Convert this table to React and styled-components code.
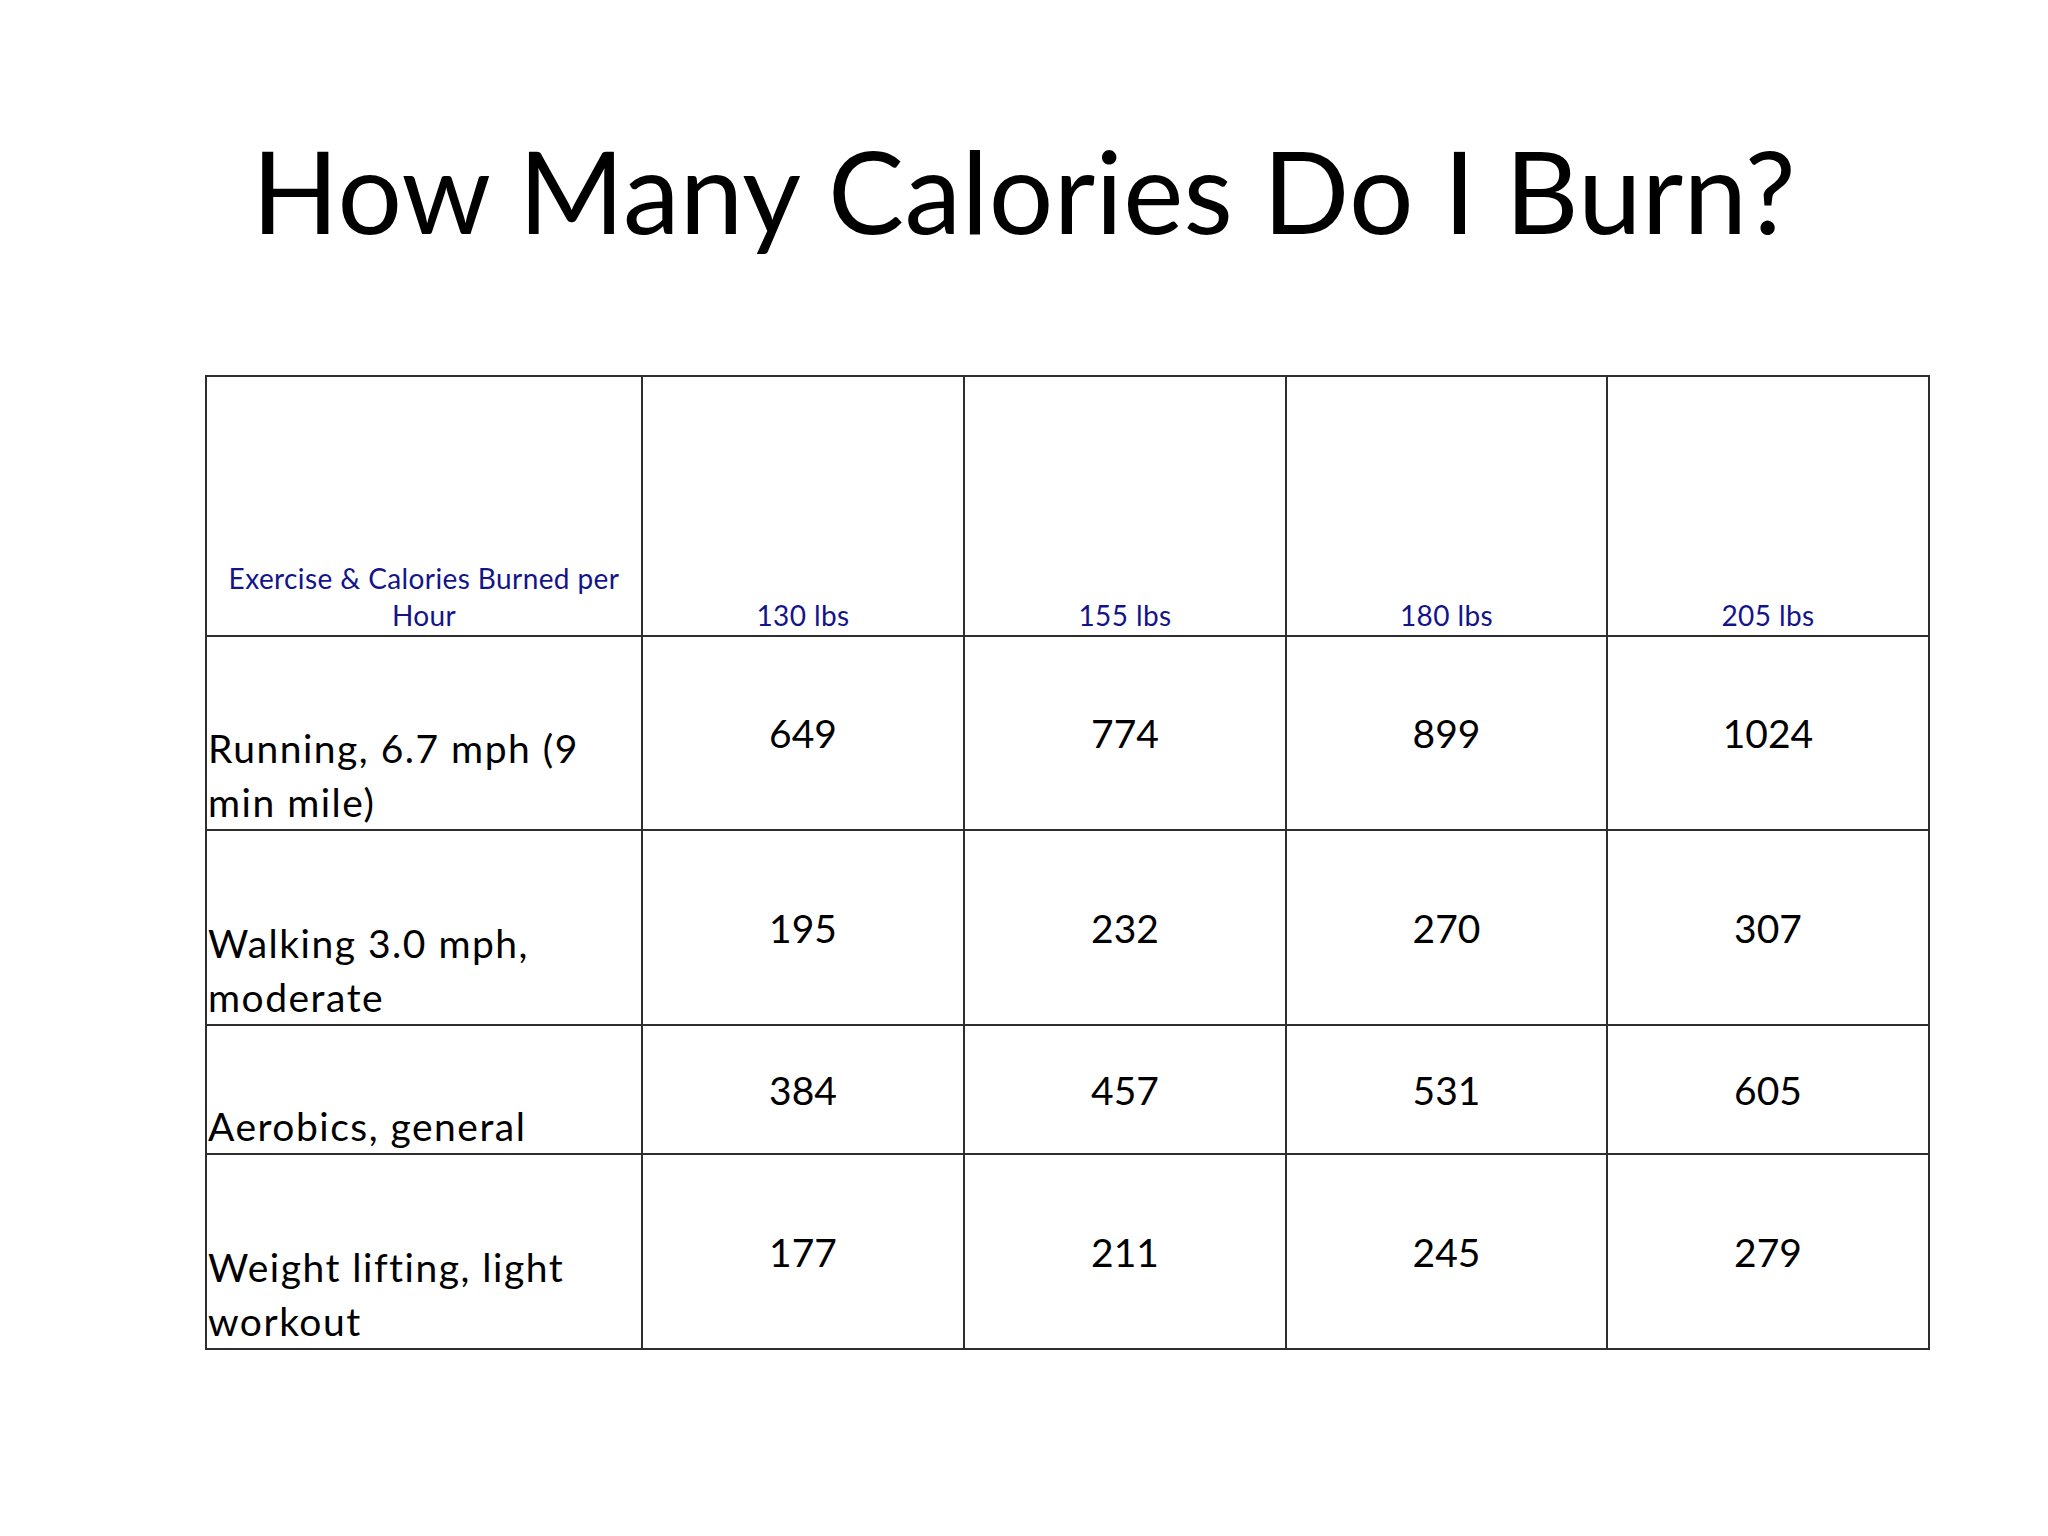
import React from "react";
import styled, { createGlobalStyle } from "styled-components";

const GlobalStyle = createGlobalStyle`
  html, body { margin: 0; padding: 0; background: #ffffff; }
  * { box-sizing: border-box; }
`;

const Slide = styled.main`
  width: 2048px;
  height: 1536px;
  background: #ffffff;
  font-family: Lato, "Open Sans", "Liberation Sans", sans-serif;
  color: #000;
  padding-top: 133px;
`;

const Title = styled.h1`
  margin: 0;
  font-weight: 400;
  font-size: 114px;
  line-height: 114px;
  text-align: center;
  letter-spacing: 0.3px;
`;

const Table = styled.div`
  margin: 128px 0 0 205px;
  width: 1725px;
  display: grid;
  grid-template-columns: 436px 322px 322px 321px 322px;
  grid-template-rows: 260px 194px 195px 129px 195px;
  border-top: 2px solid #2e2e2e;
  border-left: 2px solid #2e2e2e;
`;

const Cell = styled.div`
  border-right: 2px solid #2e2e2e;
  border-bottom: 2px solid #2e2e2e;
  display: flex;
  flex-direction: column;
  justify-content: ${(p) => (p.$middle ? "center" : "flex-end")};
  align-items: ${(p) => (p.$left ? "flex-start" : "center")};
  text-align: ${(p) => (p.$left ? "left" : "center")};
  padding: 0 4px 0 ${(p) => (p.$left ? "1px" : "4px")};
`;

const HeadText = styled.div`
  color: #14148a;
  font-size: 28px;
  line-height: 37px;
  letter-spacing: 0.4px;
  padding-bottom: 1px;
`;

const Label = styled.div`
  font-size: 39px;
  line-height: 54px;
  letter-spacing: 1.5px;
  padding-bottom: 0;
`;

const Value = styled.div`
  font-size: 39px;
  line-height: 50px;
`;

const weights = ["130 lbs", "155 lbs", "180 lbs", "205 lbs"];
const rows = [
  { label: ["Running, 6.7 mph (9", "min mile)"], values: [649, 774, 899, 1024] },
  { label: ["Walking 3.0 mph,", "moderate"], values: [195, 232, 270, 307] },
  { label: ["Aerobics, general"], values: [384, 457, 531, 605] },
  { label: ["Weight lifting, light", "workout"], values: [177, 211, 245, 279] },
];

export default function App() {
  return (
    <>
      <GlobalStyle />
      <Slide>
        <Title>How Many Calories Do I Burn?</Title>
        <Table>
          <Cell>
            <HeadText>
              Exercise &amp; Calories Burned per
              <br />
              Hour
            </HeadText>
          </Cell>
          {weights.map((w) => (
            <Cell key={w}>
              <HeadText>{w}</HeadText>
            </Cell>
          ))}
          {rows.map((r) => (
            <React.Fragment key={r.label[0]}>
              <Cell $left>
                <Label>
                  {r.label.map((l, i) => (
                    <React.Fragment key={l}>
                      {i > 0 && <br />}
                      {l}
                    </React.Fragment>
                  ))}
                </Label>
              </Cell>
              {r.values.map((v, i) => (
                <Cell key={i} $middle>
                  <Value>{v}</Value>
                </Cell>
              ))}
            </React.Fragment>
          ))}
        </Table>
      </Slide>
    </>
  );
}
